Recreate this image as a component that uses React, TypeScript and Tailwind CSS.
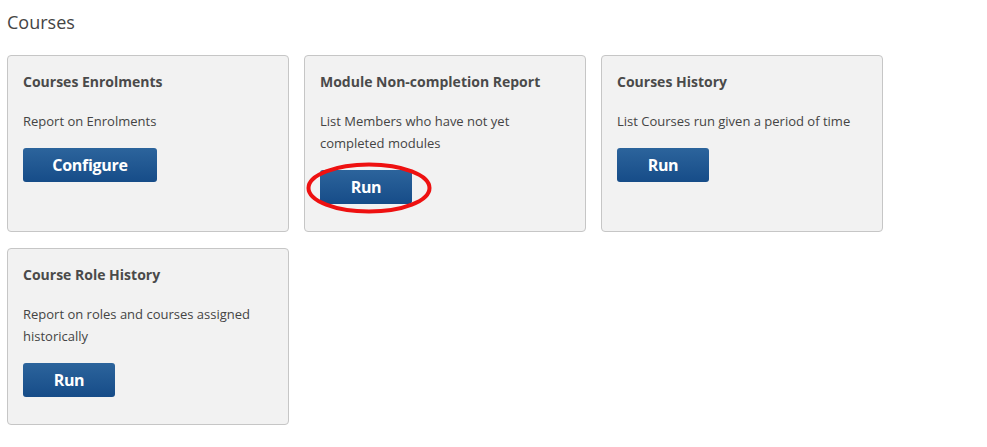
import React from 'react';

interface Report {
  title: string;
  description: string;
  action: string;
  highlight?: boolean;
}

const reports: Report[] = [
  { title: 'Courses Enrolments', description: 'Report on Enrolments', action: 'Configure' },
  {
    title: 'Module Non-completion Report',
    description: 'List Members who have not yet completed modules',
    action: 'Run',
    highlight: true,
  },
  { title: 'Courses History', description: 'List Courses run given a period of time', action: 'Run' },
  { title: 'Course Role History', description: 'Report on roles and courses assigned historically', action: 'Run' },
];

function ReportCard({ report }: { report: Report }) {
  return (
    <div className="h-[177px] rounded-[4px] border border-[#c6c6c6] bg-[#f2f2f2] px-[15px] pt-[16px]">
      <h3 className="text-[14px] font-bold leading-[20px] text-[#4a4a4a]">{report.title}</h3>
      <p className="mt-[18px] pr-4 text-[13px] leading-[22px] text-[#444]">{report.description}</p>
      <div className="relative mt-[16px] flex">
        <button
          type="button"
          className={`h-[34px] rounded-[3px] bg-gradient-to-b from-[#2c649c] to-[#164c88] text-[16px] font-bold tracking-[-0.3px] text-white ${
            report.action === 'Run' ? 'w-[92px]' : 'w-[134px]'
          }`}
        >
          {report.action}
        </button>
        {report.highlight ? (
          <svg
            className="pointer-events-none absolute left-[-14px] top-[-8px]"
            width="126"
            height="52"
            viewBox="0 0 126 52"
            aria-hidden
          >
            <ellipse cx="63" cy="26" rx="60.5" ry="23.5" fill="none" stroke="#ee1111" strokeWidth="4" />
          </svg>
        ) : null}
      </div>
    </div>
  );
}

export default function App() {
  return (
    <div className="min-h-screen bg-white px-[7px] pt-[10px]" style={{ fontFamily: '"Open Sans", "Liberation Sans", sans-serif' }}>
      <h1 className="text-[18px] leading-[24px] text-[#444]">Courses</h1>
      <div className="mt-[21px] grid w-[876px] grid-cols-3 gap-x-[15px] gap-y-[16px]">
        {reports.map((r) => (
          <ReportCard key={r.title} report={r} />
        ))}
      </div>
    </div>
  );
}
